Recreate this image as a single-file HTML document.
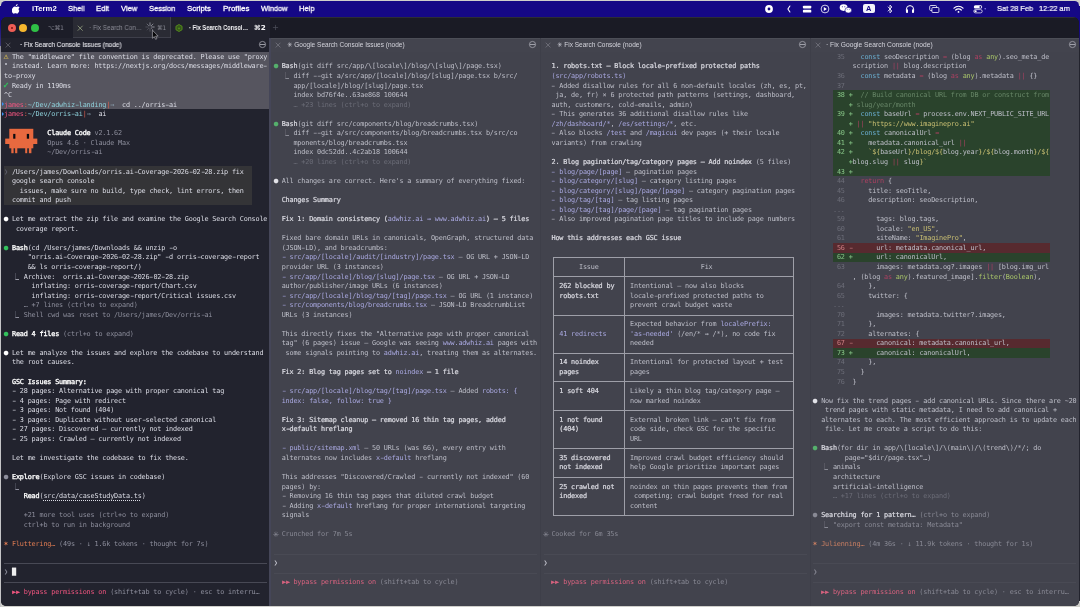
<!DOCTYPE html>
<html lang="en"><head><meta charset="utf-8"><title>iTerm2</title>
<style>
html,body{margin:0;padding:0}
body{width:1080px;height:607px;overflow:hidden;position:relative;background:#cfcfcb;font-family:"Liberation Sans","DejaVu Sans",sans-serif}
.abs{position:absolute}
#screen{position:absolute;left:1.2px;top:1px;width:1077.5px;height:40px;border-radius:4.5px 4.5px 0 0;overflow:hidden;background:#150886}
#menubar{position:absolute;left:0;top:0;width:1080px;height:17.3px}


#win{position:absolute;left:1.2px;top:17.3px;width:1077.5px;height:588.8px;border-radius:6px 6px 5px 5px;overflow:hidden;background:#191a25}
#tabbar{position:absolute;left:0;top:0;width:100%;height:20.6px;background:#1a1b25;box-shadow:inset 0 0.7px 0 #33343c}
.tab{position:absolute;top:0;height:20.6px}
.ttl{position:absolute;white-space:nowrap;font-size:7.4px;line-height:10px;font-weight:400}
.ptitle{position:absolute;top:20.4px;height:14px;}
.pane{position:absolute;top:52px;height:556px;font-family:"DejaVu Sans Mono","Liberation Mono",monospace;font-size:6.800px;line-height:9.550px;letter-spacing:-0.1639px;color:#dcdde6;z-index:3;will-change:transform;filter:blur(0.4px)}
.in{position:relative;top:0.95px;height:100%}
.p1{left:3px;width:266.5px}
.p1 .in{left:1.1px}
.p2{left:273px;width:266px}
.p2 .in{left:0.8px}
.p3{left:543px;width:266px}
.p3 .in{left:0.6px}
.p4{left:813px;width:265px}
.p4 .in{left:0.3px}
.r{height:9.550px;position:relative;white-space:pre}
.selbg{position:absolute;left:-2.9px;top:-1.1px;width:267.7px;height:57.2px;background:#56555f;z-index:-1}
i.gl{font-style:normal;display:inline-block;width:3.930px;letter-spacing:0;text-align:center;vertical-align:top;height:9.550px;overflow:visible}
.hr{position:absolute;left:0;width:263px;height:1px;background:#484955}
.dimp .hr{background:#494a54}
.b{font-weight:400;color:#fff;-webkit-text-stroke:0.32px currentColor}
.d{color:#8d8e9c}
.d2{color:#5c5d6a}
.w{color:#fff}
.g{color:#33c15c}
.y{color:#e6c84f}
.o{color:#e07c52}
.pk{color:#f0557f}
.rd{color:#e0604e}
.cy{color:#8ed0da}
.ar{color:#93abbb}
.u{text-decoration:underline dotted;text-decoration-thickness:0.6px;text-underline-offset:1.5px}
.cur{color:#eee}
.ub{position:absolute;left:0;top:-1.2px;width:247.8px;height:9.550px;background:#343437;z-index:-1}
.logo{position:absolute}
.mark{position:absolute;left:-2px;width:0;height:0;border-left:2.6px solid #3b8ff2;border-top:2.4px solid transparent;border-bottom:2.4px solid transparent}
/* dimmed panes */
.dimp{color:#bebfc9}
.dimp .b{color:#d9d9e0}
.dimp .w{color:#e2e2e8}
.dimp .d{color:#888994}
.dd{color:#6b6c77}
.dimp .g{color:#55b06c}
.dimp .pk{color:#d8627f}
.dimp .o{color:#c97f62}
.dimp .l{color:#a9a8e0}
.l{color:#b1b0f0}
.tl{position:absolute;background:#9e9fa8}
/* diff */
.ga,.ra{position:absolute;left:19.65px;top:-0.8px;width:216.6px;height:9.550px;z-index:-1}
.ga{background:#2a432c}
.ra{background:#572a2f}
.ln{color:#6c6d78}
.gn{color:#86c486}
.rn{color:#d07f84}
.kw{color:#6aaed0}
.op{color:#ad4061}
.ty{color:#a9c66a}
.st{color:#c9bf72}
.cm{color:#678667}
.t{position:absolute;white-space:nowrap;line-height:10px;height:10px;transform-origin:0 50%;display:inline-block}
#menubar .t{font-family:"Liberation Sans",sans-serif}

.g23bf{color:#9c9da8}
.dimp .g23bf{color:#888993}
.d .g23bf{color:inherit}
.t{will-change:transform}

i.hy{font-style:normal;display:inline-block;width:3.930px;letter-spacing:0;text-align:center;transform:scaleX(1.7);vertical-align:top;height:9.550px}

.g25b8{transform:scale(1.55,1.5)}
.dimp .b{-webkit-text-stroke:0.22px currentColor}

.g25cf{transform:scale(1.13)}

.g2713{transform:scale(1.35);-webkit-text-stroke:0.3px currentColor}
.g26a0{transform:scale(1.25)}

.g2733{transform:scale(1.45)}
.g2736{transform:scale(1.2)}

</style></head>
<body>
<div id="screen"></div>
<div class="abs" style="left:0;top:46px;width:1.4px;height:561px;background:linear-gradient(#8e8e9a,#c4c4c6 30px)"></div>
<div class="abs" style="left:1078.6px;top:30px;width:1.4px;height:571px;background:linear-gradient(#150886,#22232d 20px)"></div>
<div class="abs" style="left:0;top:6px;width:1.4px;height:17px;background:#150886"></div>
<div class="abs" style="left:0;top:23px;width:1.4px;height:23px;background:linear-gradient(#150886,#3a3678)"></div>
<div class="abs" style="left:1078.6px;top:6px;width:1.4px;height:26px;background:#150886"></div>
<div id="menubar"><svg class="abs" style="left:12.2px;top:3.6px" width="8" height="10" viewBox="0 0 16 20"><path fill="#fff" d="M11.2 0.2c0.1 1.2-0.4 2.3-1.1 3.1-0.8 0.9-1.9 1.5-3 1.400-0.100-1.100 0.400-2.300 1.100-3 0.800-0.900 2.100-1.500 3-1.500zM15 14.600c-0.500 1.200-0.800 1.700-1.400 2.700-0.900 1.400-2.200 3.100-3.800 3.100-1.400 0-1.800-0.900-3.700-0.900s-2.300 0.900-3.700 0.900c-1.600 0-2.800-1.600-3.700-2.900C-3.100 14.900-2.400 9.300 1.100 6.600c1-0.800 2.300-1.300 3.600-1.300 1.500 0 2.500 0.900 3.700 0.900 1.200 0 1.900-0.900 3.700-0.900 1.300 0 2.700 0.700 3.700 1.900-3.200 1.800-2.700 6.400 0.200 7.400z" transform="translate(1.5,0) scale(0.86,0.95)"/></svg><span class="t" style="left:31.60px;top:3.50px;font-size:7.70px;font-weight:700;color:#fff;transform:scaleX(1.0009);">iTerm2</span><span class="t" style="left:68.00px;top:3.50px;font-size:7.70px;font-weight:400;color:#fff;transform:scaleX(0.9695);-webkit-text-stroke:0.28px #fff;">Shell</span><span class="t" style="left:96.30px;top:3.50px;font-size:7.70px;font-weight:400;color:#fff;transform:scaleX(0.9798);-webkit-text-stroke:0.28px #fff;">Edit</span><span class="t" style="left:121.00px;top:3.50px;font-size:7.70px;font-weight:400;color:#fff;transform:scaleX(0.9788);-webkit-text-stroke:0.28px #fff;">View</span><span class="t" style="left:148.90px;top:3.50px;font-size:7.70px;font-weight:400;color:#fff;transform:scaleX(0.9674);-webkit-text-stroke:0.28px #fff;">Session</span><span class="t" style="left:187.00px;top:3.50px;font-size:7.70px;font-weight:400;color:#fff;transform:scaleX(1.0199);-webkit-text-stroke:0.28px #fff;">Scripts</span><span class="t" style="left:222.50px;top:3.50px;font-size:7.70px;font-weight:400;color:#fff;transform:scaleX(1.0321);-webkit-text-stroke:0.28px #fff;">Profiles</span><span class="t" style="left:260.50px;top:3.50px;font-size:7.70px;font-weight:400;color:#fff;transform:scaleX(0.9713);-webkit-text-stroke:0.28px #fff;">Window</span><span class="t" style="left:298.50px;top:3.50px;font-size:7.70px;font-weight:400;color:#fff;transform:scaleX(0.9851);-webkit-text-stroke:0.28px #fff;">Help</span><span class="t" style="left:997.20px;top:3.50px;font-size:7.70px;font-weight:400;color:#fff;transform:scaleX(0.9611);-webkit-text-stroke:0.2px #fff;">Sat 28 Feb</span><span class="t" style="left:1038.50px;top:3.50px;font-size:7.70px;font-weight:400;color:#fff;transform:scaleX(0.9594);-webkit-text-stroke:0.2px #fff;">12:22 am</span><svg class="abs" style="left:764px;top:3.6px" width="10" height="10" viewBox="-5 -5 10 10"><circle r="2.65" fill="none" stroke="#fff" stroke-width="2.5"/></svg><svg class="abs" style="left:784px;top:3.6px" width="10" height="10" viewBox="-5 -5 10 10"><path d="M0.900 -3L-1.100 0L0.900 3" fill="none" stroke="#fff" stroke-width="1.100" stroke-linecap="round" stroke-linejoin="round"/></svg><svg class="abs" style="left:802px;top:3.6px" width="10" height="10" viewBox="0 0 10 10"><rect x="0.900" y="1.700" width="8.400" height="2.700" rx="0.900" fill="#fff"/><rect x="0.900" y="5.800" width="8.400" height="2.800" rx="0.900" fill="#fff"/></svg><svg class="abs" style="left:820.4px;top:3.600px" width="10" height="10" viewBox="-5 -5 10 10"><circle r="3.900" fill="none" stroke="#fff" stroke-width="0.800"/><path d="M-1.200 -1.900L1.900 0L-1.200 1.900Z" fill="#fff"/></svg><svg class="abs" style="left:839px;top:3px" width="14" height="12" viewBox="0 0 14 12"><ellipse cx="4.600" cy="4.600" rx="3.900" ry="3.300" fill="#fff"/><ellipse cx="9.300" cy="7.200" rx="3.300" ry="2.800" fill="#fff" stroke="#150886" stroke-width="0.600"/><circle cx="3.300" cy="3.800" r="0.500" fill="#150886"/><circle cx="5.800" cy="3.800" r="0.500" fill="#150886"/><circle cx="8.200" cy="6.600" r="0.400" fill="#150886"/><circle cx="10.300" cy="6.600" r="0.400" fill="#150886"/></svg><div class="abs" style="left:863px;top:4.200px;width:11.700px;height:8.600px;border-radius:2px;background:#f2f2fa"></div><span class="t" style="left:866.40px;top:3.60px;font-size:7.40px;font-weight:700;color:#150886;transform:scaleX(0.9730);">A</span><svg class="abs" style="left:885px;top:3.600px" width="10" height="10" viewBox="-5 -5 10 10"><path d="M-1.900 -2L1.900 2L0 3.900V-3.900L1.900 -2L-1.900 2" fill="none" stroke="#fff" stroke-width="0.800" stroke-linejoin="round" stroke-linecap="round"/></svg><svg class="abs" style="left:905px;top:3.600px" width="10" height="10" viewBox="-5 -5 10 10"><path d="M-3.600 2.500V0.200A3.600 3.600 0 0 1 3.600 0.200V2.500" fill="none" stroke="#fff" stroke-width="1"/><rect x="-4" y="0.300" width="2" height="3.700" rx="0.800" fill="#fff"/><rect x="2" y="0.300" width="2" height="3.700" rx="0.800" fill="#fff"/></svg><svg class="abs" style="left:929px;top:3.600px" width="11" height="10" viewBox="0 0 11 10"><rect x="0.700" y="1.500" width="6.800" height="5" rx="1" fill="none" stroke="#fff" stroke-width="0.800"/><rect x="2.900" y="3.500" width="7" height="5" rx="1" fill="#150886" stroke="#fff" stroke-width="0.800"/></svg><svg class="abs" style="left:953px;top:3.600px" width="11" height="10" viewBox="-5.500 -5 11 10"><path d="M-4.500 -0.800A6.200 6.200 0 0 1 4.500 -0.800" fill="none" stroke="#fff" stroke-width="1.200" stroke-linecap="round"/><path d="M-2.800 1A3.900 3.900 0 0 1 2.800 1" fill="none" stroke="#fff" stroke-width="1.200" stroke-linecap="round"/><circle cy="2.900" r="0.900" fill="#fff"/></svg><svg class="abs" style="left:973px;top:3.600px" width="14" height="10" viewBox="0 0 14 10"><rect x="0.800" y="1.300" width="8.400" height="3.300" rx="1.650" fill="#fff"/><circle cx="7.400" cy="2.950" r="1" fill="#150886"/><rect x="0.800" y="5.600" width="8.400" height="3.300" rx="1.650" fill="none" stroke="#fff" stroke-width="0.700"/><circle cx="2.600" cy="7.250" r="1.100" fill="#fff"/><circle cx="12.200" cy="4.700" r="0.800" fill="#8d7df0"/></svg></div>
<div id="win"><div id="tabbar"><div class="tab" style="left:0;width:71.700px;background:#1c1d28"></div><div class="tab" style="left:71.700px;width:98px;background:#2a2b34;box-shadow:inset -0.800px -0.800px 0 #464751"></div><div class="tab" style="left:169.700px;width:99.400px;background:#21222d;height:22px"></div></div><div class="ptitle" style="left:0;width:267.700px;background:#21222d"></div><div class="ptitle" style="left:269px;width:809px;background:#43444e;box-shadow:inset 0 0.800px 0 #50515b"></div><div class="abs" style="left:0;top:34.400px;width:267.700px;height:560px;background:#22232e"></div><div class="abs" style="left:267.700px;top:20.600px;width:2px;height:568px;background:#454658"></div><div class="abs" style="left:269.700px;top:34.400px;width:809px;height:560px;background:#42434d"></div><div class="abs" style="left:538.800px;top:21px;width:0.700px;height:568px;background:#3e3f49"></div><div class="abs" style="left:808.600px;top:21px;width:0.700px;height:568px;background:#3e3f49"></div></div>
<div class="abs" style="left:8.00px;top:23.90px;width:8.00px;height:8.00px;border-radius:50%;background:#ee5d55;"></div><div class="abs" style="left:10.70px;top:26.60px;width:2.60px;height:2.60px;border-radius:50%;background:#7e1410;"></div>
<div class="abs" style="left:19.40px;top:23.90px;width:8.00px;height:8.00px;border-radius:50%;background:#f6b72e;"></div><div class="abs" style="left:30.70px;top:23.90px;width:8.00px;height:8.00px;border-radius:50%;background:#2fc146;"></div>
<span class="t" style="left:48.30px;top:22.90px;font-size:6.20px;font-weight:400;color:#8b8c97;transform:scaleX(0.9100);font-family:'DejaVu Sans',sans-serif;">⌥⌘1</span>
<svg class="abs" style="left:77.30px;top:24.70px" width="6.40" height="6.40" viewBox="-3.20 -3.20 6.40 6.40"><path d="M-2.20 -2.20L2.20 2.20M-2.20 2.20L2.20 -2.20" stroke="#aab78f" stroke-width="0.70" fill="none" stroke-linecap="round"/></svg>
<span class="t" style="left:89.00px;top:22.90px;font-size:6.80px;font-weight:400;color:#8c8d97;transform:scaleX(0.9167);">· Fix Search Con…</span>
<svg class="abs" style="left:144.500px;top:22.400px" width="10" height="10" viewBox="-5 -5 10 10"><path d="M0 -1.500V-4.200" stroke="#a4a5af" stroke-opacity="0.95" stroke-width="0.800" stroke-linecap="round" transform="rotate(0)"/><path d="M0 -1.500V-4.200" stroke="#a4a5af" stroke-opacity="0.85" stroke-width="0.800" stroke-linecap="round" transform="rotate(45)"/><path d="M0 -1.500V-4.200" stroke="#a4a5af" stroke-opacity="1.00" stroke-width="0.800" stroke-linecap="round" transform="rotate(90)"/><path d="M0 -1.500V-4.200" stroke="#a4a5af" stroke-opacity="0.55" stroke-width="0.800" stroke-linecap="round" transform="rotate(135)"/><path d="M0 -1.500V-4.200" stroke="#a4a5af" stroke-opacity="0.40" stroke-width="0.800" stroke-linecap="round" transform="rotate(180)"/><path d="M0 -1.500V-4.200" stroke="#a4a5af" stroke-opacity="0.30" stroke-width="0.800" stroke-linecap="round" transform="rotate(225)"/><path d="M0 -1.500V-4.200" stroke="#a4a5af" stroke-opacity="0.35" stroke-width="0.800" stroke-linecap="round" transform="rotate(270)"/><path d="M0 -1.500V-4.200" stroke="#a4a5af" stroke-opacity="0.60" stroke-width="0.800" stroke-linecap="round" transform="rotate(315)"/></svg>
<span class="t" style="left:156.90px;top:22.90px;font-size:6.20px;font-weight:400;color:#8a8b95;transform:scaleX(0.8891);font-family:'DejaVu Sans',sans-serif;">⌘1</span>
<svg class="abs" style="left:174.700px;top:23.800px" width="8" height="8" viewBox="-4 -4 8 8"><path d="M0 -3.500L3.050 -1.750V1.750L0 3.500L-3.050 1.750V-1.750Z" fill="#36581a" stroke="#5b961d" stroke-width="0.850"/><circle cy="0.400" r="0.950" fill="#528c1c"/></svg>
<span class="t" style="left:189.00px;top:22.90px;font-size:6.80px;font-weight:700;color:#f4f4f6;transform:scaleX(0.8424);">· Fix Search Consol…</span>
<span class="t" style="left:254.00px;top:22.90px;font-size:6.80px;font-weight:700;color:#f4f4f6;transform:scaleX(1.0584);font-family:'DejaVu Sans',sans-serif;">⌘2</span>
<svg class="abs" style="left:272.100px;top:24.400px" width="7" height="7" viewBox="-3.500 -3.500 7 7"><path d="M-2.600 0H2.600M0 -2.600V2.600" stroke="#4e4f5a" stroke-width="0.700"/></svg>
<svg class="abs" style="left:5.20px;top:41.60px" width="6.20" height="6.20" viewBox="-3.10 -3.10 6.20 6.20"><path d="M-2.10 -2.10L2.10 2.10M-2.10 2.10L2.10 -2.10" stroke="#6c6d78" stroke-width="0.70" fill="none" stroke-linecap="round"/></svg>
<span class="t" style="left:19.70px;top:39.70px;font-size:6.50px;font-weight:400;color:#e4e4ea;transform:scaleX(0.9964);-webkit-text-stroke:0.1px #e4e4ea;">· Fix Search Console Issues (node)</span>
<svg class="abs" style="left:258.20px;top:40.20px" width="9" height="9" viewBox="-4.5 -4.5 9 9"><circle r="3.10" fill="none" stroke="#a9aab3" stroke-width="0.75"/><path d="M-2.7 0H2.7" stroke="#a9aab3" stroke-width="0.9"/></svg>
<svg class="abs" style="left:275.10px;top:41.60px" width="6.20" height="6.20" viewBox="-3.10 -3.10 6.20 6.20"><path d="M-2.10 -2.10L2.10 2.10M-2.10 2.10L2.10 -2.10" stroke="#7d7e88" stroke-width="0.70" fill="none" stroke-linecap="round"/></svg>
<span class="t" style="left:287.20px;top:39.70px;font-size:6.50px;font-weight:400;color:#d4d4dc;transform:scaleX(1.0011);">✳ Google Search Console Issues (node)</span>
<svg class="abs" style="left:528.00px;top:40.20px" width="9" height="9" viewBox="-4.5 -4.5 9 9"><circle r="3.10" fill="none" stroke="#a9aab3" stroke-width="0.75"/><path d="M-2.7 0H2.7" stroke="#a9aab3" stroke-width="0.9"/></svg>
<svg class="abs" style="left:544.90px;top:41.60px" width="6.20" height="6.20" viewBox="-3.10 -3.10 6.20 6.20"><path d="M-2.10 -2.10L2.10 2.10M-2.10 2.10L2.10 -2.10" stroke="#7d7e88" stroke-width="0.70" fill="none" stroke-linecap="round"/></svg>
<span class="t" style="left:557.00px;top:39.70px;font-size:6.50px;font-weight:400;color:#d4d4dc;transform:scaleX(1.0001);">✳ Fix Search Console (node)</span>
<svg class="abs" style="left:797.50px;top:40.20px" width="9" height="9" viewBox="-4.5 -4.5 9 9"><circle r="3.10" fill="none" stroke="#a9aab3" stroke-width="0.75"/><path d="M-2.7 0H2.7" stroke="#a9aab3" stroke-width="0.9"/></svg>
<svg class="abs" style="left:814.90px;top:41.60px" width="6.20" height="6.20" viewBox="-3.10 -3.10 6.20 6.20"><path d="M-2.10 -2.10L2.10 2.10M-2.10 2.10L2.10 -2.10" stroke="#7d7e88" stroke-width="0.70" fill="none" stroke-linecap="round"/></svg>
<span class="t" style="left:826.40px;top:39.70px;font-size:6.50px;font-weight:400;color:#d4d4dc;transform:scaleX(1.0246);">· Fix Google Search Console (node)</span>
<svg class="abs" style="left:1068.00px;top:40.20px" width="9" height="9" viewBox="-4.5 -4.5 9 9"><circle r="3.10" fill="none" stroke="#a9aab3" stroke-width="0.75"/><path d="M-2.7 0H2.7" stroke="#a9aab3" stroke-width="0.9"/></svg>
<svg class="abs" style="left:150.500px;top:28.600px;z-index:9" width="9" height="12" viewBox="0 0 9 12"><path d="M1.400 1.200V9.300L3.300 7.600L4.600 10.300L5.900 9.700L4.600 7.100H7.200Z" fill="#08080a" stroke="#a9a9b0" stroke-width="0.700" stroke-linejoin="round"/></svg>
<div class="pane p1" id="p1">
<div class="in"><div class="r sel"><span class="y"><i class="gl g26a0">⚠</i></span> The "middleware" file convention is deprecated. Please use "proxy</div>
<div class="r sel">" instead. Learn more: https://nextjs.org/docs/messages/middleware<i class="hy">-</i></div>
<div class="r sel">to<i class="hy">-</i>proxy</div>
<div class="r sel"><span class="g"><i class="gl g2713">✓</i></span> Ready in 1190ms</div>
<div class="r sel">^C</div>
<div class="r sel"><span class="pk">james</span><span class="rd">:</span><span class="cy">~/Dev/adwhiz<i class="hy">-</i>landing</span><span class="rd">|</span><span class="ar"><i class="gl g21d2">⇒</i></span>  cd ../orris<i class="hy">-</i>ai</div>
<div class="r"><span class="pk">james</span><span class="rd">:</span><span class="cy">~/Dev/orris<i class="hy">-</i>ai</span><span class="rd">|</span><span class="ar"><i class="gl g21d2">⇒</i></span>  ai</div>
<div class="r"></div>
<div class="r">           <span class="b">Claude Code</span> <span class="d">v2.1.62</span></div>
<div class="r">           <span class="d">Opus 4.6 <i class="gl g00b7">·</i> Claude Max</span></div>
<div class="r">           <span class="d">~/Dev/orris<i class="hy">-</i>ai</span></div>
<div class="r"></div>
<div class="r"><span class="ub"></span><span class="d2"><i class="gl g276f">❯</i></span> /Users/james/Downloads/orris.ai<i class="hy">-</i>Coverage<i class="hy">-</i>2026<i class="hy">-</i>02<i class="hy">-</i>28.zip fix</div>
<div class="r"><span class="ub"></span>  google search console</div>
<div class="r"><span class="ub"></span>    issues, make sure no build, type check, lint errors, then</div>
<div class="r"><span class="ub"></span>  commit and push</div>
<div class="r"></div>
<div class="r"><span class="w"><i class="gl g25cf">●</i></span> Let me extract the zip file and examine the Google Search Console</div>
<div class="r">   coverage report.</div>
<div class="r"></div>
<div class="r"><span class="g"><i class="gl g25cf">●</i></span> <span class="b">Bash</span>(cd /Users/james/Downloads &amp;&amp; unzip <i class="hy">-</i>o</div>
<div class="r">      "orris.ai<i class="hy">-</i>Coverage<i class="hy">-</i>2026<i class="hy">-</i>02<i class="hy">-</i>28.zip" <i class="hy">-</i>d orris<i class="hy">-</i>coverage<i class="hy">-</i>report</div>
<div class="r">      &amp;&amp; ls orris<i class="hy">-</i>coverage<i class="hy">-</i>report/)</div>
<div class="r">  <i class="gl g23bf">⎿</i>  Archive:  orris.ai<i class="hy">-</i>Coverage<i class="hy">-</i>2026<i class="hy">-</i>02<i class="hy">-</i>28.zip</div>
<div class="r">       inflating: orris<i class="hy">-</i>coverage<i class="hy">-</i>report/Chart.csv</div>
<div class="r">       inflating: orris<i class="hy">-</i>coverage<i class="hy">-</i>report/Critical issues.csv</div>
<div class="r">     <span class="d"><i class="gl g2026">…</i> +7 lines (ctrl+o to expand)</span></div>
<div class="r">  <span class="d"><i class="gl g23bf">⎿</i>  Shell cwd was reset to /Users/james/Dev/orris<i class="hy">-</i>ai</span></div>
<div class="r"></div>
<div class="r"><span class="g"><i class="gl g25cf">●</i></span> <span class="b">Read 4 files</span> <span class="d">(ctrl+o to expand)</span></div>
<div class="r"></div>
<div class="r"><span class="w"><i class="gl g25cf">●</i></span> Let me analyze the issues and explore the codebase to understand</div>
<div class="r">  the root causes.</div>
<div class="r"></div>
<div class="r">  <span class="b">GSC Issues Summary:</span></div>
<div class="r">  <i class="hy">-</i> 28 pages: Alternative page with proper canonical tag</div>
<div class="r">  <i class="hy">-</i> 4 pages: Page with redirect</div>
<div class="r">  <i class="hy">-</i> 3 pages: Not found (404)</div>
<div class="r">  <i class="hy">-</i> 3 pages: Duplicate without user<i class="hy">-</i>selected canonical</div>
<div class="r">  <i class="hy">-</i> 27 pages: Discovered <i class="gl g2013">–</i> currently not indexed</div>
<div class="r">  <i class="hy">-</i> 25 pages: Crawled <i class="gl g2013">–</i> currently not indexed</div>
<div class="r"></div>
<div class="r">  Let me investigate the codebase to fix these.</div>
<div class="r"></div>
<div class="r"><span class="d"><i class="gl g25cf">●</i></span> <span class="b">Explore</span>(Explore GSC issues in codebase)</div>
<div class="r">  <span class="d"><i class="gl g23bf">⎿</i></span></div>
<div class="r">     <span class="b">Read</span>(<span class="u">src/data/caseStudyData.ts</span>)</div>
<div class="r"></div>
<div class="r">     <span class="d">+21 more tool uses (ctrl+o to expand)</span></div>
<div class="r">     <span class="d">ctrl+b to run in background</span></div>
<div class="r"></div>
<div class="r"><span class="o"><i class="gl g2736">✶</i></span> <span class="o">Fluttering<i class="gl g2026">…</i></span> <span class="d">(49s <i class="gl g00b7">·</i> <i class="gl g2193">↓</i> 1.6k tokens <i class="gl g00b7">·</i> thought for 7s)</span></div>
<div class="r"></div>
<div class="r"></div>
<div class="r"><span class="d"><i class="gl g276f">❯</i></span> <span class="cur"><i class="gl g2588">█</i></span></div>
<div class="r"></div>
<div class="r">  <span class="pk"><i class="gl g25b8">▸</i><i class="gl g25b8">▸</i> bypass permissions on</span> <span class="d">(shift+tab to cycle) <i class="gl g00b7">·</i> esc to interru<i class="gl g2026">…</i></span></div><div class="selbg"></div><div class="hr" style="top:510.32px"></div><div class="hr" style="top:529.42px"></div>
<svg class="logo" width="34" height="26" viewBox="0 0 34 26" style="left:1.2px;top:74.7px">
<g fill="#e8693f"><rect x="4.3" y="0.8" width="24" height="19.5"/><rect x="0.2" y="10.6" width="32.1" height="5.4"/>
<rect x="6.3" y="20" width="2.3" height="5.2"/><rect x="10.1" y="20" width="2.2" height="5.2"/><rect x="20.2" y="20" width="2" height="5.2"/><rect x="23.9" y="20" width="2.5" height="5.2"/></g>
<g fill="#0b0b10"><rect x="8.2" y="5.9" width="2.2" height="4.8"/><rect x="21.8" y="5.9" width="2.3" height="4.8"/></g>
</svg>
<div class="mark" style="left:-2.4px;top:49.35px"></div><div class="mark" style="left:-2.4px;top:58.90px"></div>
</div>
</div>
<div class="pane p2 dimp" id="p2">
<div class="in"><div class="r"></div>
<div class="r"><span class="g"><i class="gl g25cf">●</i></span> <span class="b">Bash</span>(git diff src/app/\[locale\]/blog/\[slug\]/page.tsx)</div>
<div class="r">  <i class="gl g23bf">⎿</i>  diff <i class="hy">-</i><i class="hy">-</i>git a/src/app/[locale]/blog/[slug]/page.tsx b/src/</div>
<div class="r">     app/[locale]/blog/[slug]/page.tsx</div>
<div class="r">     index bd76f4e..63ae868 100644</div>
<div class="r">     <span class="dd"><i class="gl g2026">…</i> +23 lines (ctrl+o to expand)</span></div>
<div class="r"></div>
<div class="r"><span class="g"><i class="gl g25cf">●</i></span> <span class="b">Bash</span>(git diff src/components/blog/breadcrumbs.tsx)</div>
<div class="r">  <i class="gl g23bf">⎿</i>  diff <i class="hy">-</i><i class="hy">-</i>git a/src/components/blog/breadcrumbs.tsx b/src/co</div>
<div class="r">     mponents/blog/breadcrumbs.tsx</div>
<div class="r">     index 0dc52dd..4c2ab18 100644</div>
<div class="r">     <span class="dd"><i class="gl g2026">…</i> +20 lines (ctrl+o to expand)</span></div>
<div class="r"></div>
<div class="r"><span class="w"><i class="gl g25cf">●</i></span> All changes are correct. Here's a summary of everything fixed:</div>
<div class="r"></div>
<div class="r">  <span class="b">Changes Summary</span></div>
<div class="r"></div>
<div class="r">  <span class="b">Fix 1: Domain consistency (</span><span class="l">adwhiz.ai <i class="gl g2192">→</i> www.adwhiz.ai</span><span class="b">) <i class="gl g2014">—</i> 5 files</span></div>
<div class="r"></div>
<div class="r">  Fixed bare domain URLs in canonicals, OpenGraph, structured data</div>
<div class="r">  (JSON<i class="hy">-</i>LD), and breadcrumbs:</div>
<div class="r">  <span class="l"><i class="hy">-</i></span> <span class="l">src/app/[locale]/audit/[industry]/page.tsx</span> <i class="gl g2014">—</i> OG URL + JSON<i class="hy">-</i>LD</div>
<div class="r">  provider URL (3 instances)</div>
<div class="r">  <span class="l"><i class="hy">-</i></span> <span class="l">src/app/[locale]/blog/[slug]/page.tsx</span> <i class="gl g2014">—</i> OG URL + JSON<i class="hy">-</i>LD</div>
<div class="r">  author/publisher/image URLs (6 instances)</div>
<div class="r">  <span class="l"><i class="hy">-</i></span> <span class="l">src/app/[locale]/blog/tag/[tag]/page.tsx</span> <i class="gl g2014">—</i> OG URL (1 instance)</div>
<div class="r">  <span class="l"><i class="hy">-</i></span> <span class="l">src/components/blog/breadcrumbs.tsx</span> <i class="gl g2014">—</i> JSON<i class="hy">-</i>LD BreadcrumbList</div>
<div class="r">  URLs (3 instances)</div>
<div class="r"></div>
<div class="r">  This directly fixes the "Alternative page with proper canonical</div>
<div class="r">  tag" (6 pages) issue <i class="gl g2014">—</i> Google was seeing <span class="l">www.adwhiz.ai</span> pages with</div>
<div class="r">   some signals pointing to <span class="l">adwhiz.ai</span>, treating them as alternates.</div>
<div class="r"></div>
<div class="r">  <span class="b">Fix 2: Blog tag pages set to </span><span class="l">noindex</span><span class="b"> <i class="gl g2014">—</i> 1 file</span></div>
<div class="r"></div>
<div class="r">  <span class="l"><i class="hy">-</i></span> <span class="l">src/app/[locale]/blog/tag/[tag]/page.tsx</span> <i class="gl g2014">—</i> Added <span class="l">robots: {</span></div>
<div class="r">  <span class="l">index: false, follow: true }</span></div>
<div class="r"></div>
<div class="r">  <span class="b">Fix 3: Sitemap cleanup <i class="gl g2014">—</i> removed 16 thin tag pages, added</span></div>
<div class="r">  <span class="b">x<i class="hy">-</i>default hreflang</span></div>
<div class="r"></div>
<div class="r">  <span class="l"><i class="hy">-</i></span> <span class="l">public/sitemap.xml</span> <i class="gl g2014">—</i> 50 URLs (was 66), every entry with</div>
<div class="r">  alternates now includes <span class="l">x<i class="hy">-</i>default</span> hreflang</div>
<div class="r"></div>
<div class="r">  This addresses "Discovered/Crawled <i class="hy">-</i> currently not indexed" (60</div>
<div class="r">  pages) by:</div>
<div class="r">  <i class="hy">-</i> Removing 16 thin tag pages that diluted crawl budget</div>
<div class="r">  <i class="hy">-</i> Adding <span class="l">x<i class="hy">-</i>default</span> hreflang for proper international targeting</div>
<div class="r">  signals</div>
<div class="r"></div>
<div class="r"><span class="d"><i class="gl g2733">✳</i> Crunched for 7m 5s</span></div>
<div class="r"></div>
<div class="r"></div>
<div class="r"><i class="gl g276f">❯</i></div>
<div class="r"></div>
<div class="r">  <span class="pk"><i class="gl g25b8">▸</i><i class="gl g25b8">▸</i> bypass permissions on</span> <span class="d">(shift+tab to cycle)</span></div>
<div class="r"></div><div class="hr" style="top:500.77px"></div><div class="hr" style="top:519.88px"></div></div>
</div>
<div class="pane p3 dimp" id="p3">
<div class="in"><div class="r"></div>
<div class="r">  <span class="b">1. robots.txt <i class="gl g2014">—</i> Block locale<i class="hy">-</i>prefixed protected paths</span></div>
<div class="r">  <span class="l">(src/app/robots.ts)</span></div>
<div class="r">  <i class="hy">-</i> Added disallow rules for all 6 non<i class="hy">-</i>default locales (zh, es, pt,</div>
<div class="r">   ja, de, fr) <i class="gl g00d7">×</i> 6 protected path patterns (settings, dashboard,</div>
<div class="r">  auth, customers, cold<i class="hy">-</i>emails, admin)</div>
<div class="r">  <i class="hy">-</i> This generates 36 additional disallow rules like</div>
<div class="r">  <span class="l">/zh/dashboard/*</span>, <span class="l">/es/settings/*</span>, etc.</div>
<div class="r">  <i class="hy">-</i> Also blocks <span class="l">/test</span> and <span class="l">/magicui</span> dev pages (+ their locale</div>
<div class="r">  variants) from crawling</div>
<div class="r"></div>
<div class="r">  <span class="b">2. Blog pagination/tag/category pages <i class="gl g2014">—</i> Add noindex</span> (5 files)</div>
<div class="r">  <span class="l"><i class="hy">-</i></span> <span class="l">blog/page/[page]</span> <i class="gl g2014">—</i> pagination pages</div>
<div class="r">  <span class="l"><i class="hy">-</i></span> <span class="l">blog/category/[slug]</span> <i class="gl g2014">—</i> category listing pages</div>
<div class="r">  <span class="l"><i class="hy">-</i></span> <span class="l">blog/category/[slug]/page/[page]</span> <i class="gl g2014">—</i> category pagination pages</div>
<div class="r">  <span class="l"><i class="hy">-</i></span> <span class="l">blog/tag/[tag]</span> <i class="gl g2014">—</i> tag listing pages</div>
<div class="r">  <span class="l"><i class="hy">-</i></span> <span class="l">blog/tag/[tag]/page/[page]</span> <i class="gl g2014">—</i> tag pagination pages</div>
<div class="r">  <i class="hy">-</i> Also improved pagination page titles to include page numbers</div>
<div class="r"></div>
<div class="r">  <span class="b">How this addresses each GSC issue</span></div>
<div class="r"></div>
<div class="r"></div>
<div class="r">         Issue                          Fix</div>
<div class="r"></div>
<div class="r">    <span class="b">262 blocked by</span>    Intentional <i class="gl g2014">—</i> now also blocks</div>
<div class="r">    <span class="b">robots.txt</span>        locale<i class="hy">-</i>prefixed protected paths to</div>
<div class="r">                      prevent crawl budget waste</div>
<div class="r"></div>
<div class="r">                      Expected behavior from <span class="l">localePrefix:</span></div>
<div class="r">    <span class="l">41 redirects</span>      <span class="l">'as<i class="hy">-</i>needed'</span> (/en/* <i class="gl g2192">→</i> /*), no code fix</div>
<div class="r">                      needed</div>
<div class="r"></div>
<div class="r">    <span class="b">14 noindex</span>        Intentional for protected layout + test</div>
<div class="r">    <span class="b">pages</span>             pages</div>
<div class="r"></div>
<div class="r">    <span class="b">1 soft 404</span>        Likely a thin blog tag/category page <i class="gl g2014">—</i></div>
<div class="r">                      now marked noindex</div>
<div class="r"></div>
<div class="r">    <span class="b">1 not found</span>       External broken link <i class="gl g2014">—</i> can't fix from</div>
<div class="r">    <span class="b">(404)</span>             code side, check GSC for the specific</div>
<div class="r">                      URL</div>
<div class="r"></div>
<div class="r">    <span class="b">35 discovered</span>     Improved crawl budget efficiency should</div>
<div class="r">    <span class="b">not indexed</span>       help Google prioritize important pages</div>
<div class="r"></div>
<div class="r">    <span class="b">25 crawled not</span>    noindex on thin pages prevents them from</div>
<div class="r">    <span class="b">indexed</span>            competing; crawl budget freed for real</div>
<div class="r">                      content</div>
<div class="r"></div>
<div class="r"></div>
<div class="r"><span class="d"><i class="gl g2733">✳</i> Cooked for 6m 35s</span></div>
<div class="r"></div>
<div class="r"></div>
<div class="r"><i class="gl g276f">❯</i></div>
<div class="r"></div>
<div class="r">  <span class="pk"><i class="gl g25b8">▸</i><i class="gl g25b8">▸</i> bypass permissions on</span> <span class="d">(shift+tab to cycle)</span></div>
<div class="r"></div><div class="hr" style="top:500.77px"></div><div class="hr" style="top:519.88px"></div><div class="tl" style="left:10.05px;top:204.33px;width:240.05px;height:1px"></div><div class="tl" style="left:10.05px;top:223.43px;width:240.05px;height:1px"></div><div class="tl" style="left:10.05px;top:261.62px;width:240.05px;height:1px"></div><div class="tl" style="left:10.05px;top:299.82px;width:240.05px;height:1px"></div><div class="tl" style="left:10.05px;top:328.48px;width:240.05px;height:1px"></div><div class="tl" style="left:10.05px;top:357.12px;width:240.05px;height:1px"></div><div class="tl" style="left:10.05px;top:395.32px;width:240.05px;height:1px"></div><div class="tl" style="left:10.05px;top:423.98px;width:240.05px;height:1px"></div><div class="tl" style="left:10.05px;top:462.18px;width:240.05px;height:1px"></div><div class="tl" style="left:9.55px;top:204.33px;width:1px;height:258.85px"></div><div class="tl" style="left:80.25px;top:204.33px;width:1px;height:258.85px"></div><div class="tl" style="left:249.60px;top:204.33px;width:1px;height:258.85px"></div></div>
</div>
<div class="pane p4 dimp" id="p4">
<div class="in"><div class="r">      <span class="ln">35</span>    <span class="kw">const</span> seoDescription <span class="op">=</span> (blog <span class="op">as</span> <span class="ty">any</span>).seo_meta_de</div>
<div class="r">          scription <span class="op">||</span> blog.description</div>
<div class="r">      <span class="ln">36</span>    <span class="kw">const</span> metadata <span class="op">=</span> (blog <span class="op">as</span> <span class="ty">any</span>).metadata <span class="op">||</span> {}</div>
<div class="r">      <span class="ln">37</span></div>
<div class="r">     <span class="ga"></span><span class="gn"> 38 +</span>  <span class="cm">// Build canonical URL from DB or construct from</span></div>
<div class="r">     <span class="ga"></span><span class="gn">    +</span><span class="cm"> slug/year/month</span></div>
<div class="r">     <span class="ga"></span><span class="gn"> 39 +</span>  <span class="kw">const</span> baseUrl <span class="op">=</span> process.env.NEXT_PUBLIC_SITE_URL</div>
<div class="r">     <span class="ga"></span><span class="gn">    +</span> <span class="op">||</span> <span class="st">"https://www.imaginepro.ai"</span></div>
<div class="r">     <span class="ga"></span><span class="gn"> 40 +</span>  <span class="kw">const</span> canonicalUrl <span class="op">=</span></div>
<div class="r">     <span class="ga"></span><span class="gn"> 41 +</span>    metadata.canonical_url <span class="op">||</span></div>
<div class="r">     <span class="ga"></span><span class="gn"> 42 +</span>    <span class="st">`${</span>baseUrl<span class="st">}/blog/${</span>blog.year<span class="st">}/${</span>blog.month<span class="st">}/${</span></div>
<div class="r">     <span class="ga"></span><span class="gn">    +</span>blog.slug <span class="op">||</span> slug<span class="st">}`</span></div>
<div class="r">     <span class="ga"></span><span class="gn"> 43 +</span></div>
<div class="r">      <span class="ln">44</span>    <span class="op">return</span> {</div>
<div class="r">      <span class="ln">45</span>      title: seoTitle,</div>
<div class="r">      <span class="ln">46</span>      description: seoDescription,</div>
<div class="r">     <span class="ln">...</span></div>
<div class="r">      <span class="ln">59</span>        tags: blog.tags,</div>
<div class="r">      <span class="ln">60</span>        locale: <span class="st">"en_US"</span>,</div>
<div class="r">      <span class="ln">61</span>        siteName: <span class="st">"ImaginePro"</span>,</div>
<div class="r">     <span class="ra"></span><span class="rn"> 56 <i class="hy">-</i></span>      url: metadata.canonical_url,</div>
<div class="r">     <span class="ga"></span><span class="gn"> 62 +</span>      url: canonicalUrl,</div>
<div class="r">      <span class="ln">63</span>        images: metadata.og?.images <span class="op">||</span> [blog.img_url</div>
<div class="r">          , (blog <span class="op">as</span> <span class="ty">any</span>).featured_image].<span class="ty">filter</span>(<span class="ty">Boolean</span>),</div>
<div class="r">      <span class="ln">64</span>      },</div>
<div class="r">      <span class="ln">65</span>      twitter: {</div>
<div class="r">     <span class="ln">...</span></div>
<div class="r">      <span class="ln">70</span>        images: metadata.twitter?.images,</div>
<div class="r">      <span class="ln">71</span>      },</div>
<div class="r">      <span class="ln">72</span>      alternates: {</div>
<div class="r">     <span class="ra"></span><span class="rn"> 67 <i class="hy">-</i></span>      canonical: metadata.canonical_url,</div>
<div class="r">     <span class="ga"></span><span class="gn"> 73 +</span>      canonical: canonicalUrl,</div>
<div class="r">      <span class="ln">74</span>      },</div>
<div class="r">      <span class="ln">75</span>    }</div>
<div class="r">      <span class="ln">76</span>  }</div>
<div class="r"></div>
<div class="r"><span class="w"><i class="gl g25cf">●</i></span> Now fix the trend pages <i class="hy">-</i> add canonical URLs. Since there are ~20</div>
<div class="r">   trend pages with static metadata, I need to add canonical +</div>
<div class="r">  alternates to each. The most efficient approach is to update each</div>
<div class="r">   file. Let me create a script to do this:</div>
<div class="r"></div>
<div class="r"><span class="g"><i class="gl g25cf">●</i></span> <span class="b">Bash</span>(for dir in app/\[locale\]/\(main\)/\(trend\)/*/; do</div>
<div class="r">        page="$dir/page.tsx"<i class="gl g2026">…</i>)</div>
<div class="r">  <i class="gl g23bf">⎿</i>  animals</div>
<div class="r">     architecture</div>
<div class="r">     artificial<i class="hy">-</i>intelligence</div>
<div class="r">     <span class="dd"><i class="gl g2026">…</i> +17 lines (ctrl+o to expand)</span></div>
<div class="r"></div>
<div class="r"><span class="d"><i class="gl g25cf">●</i></span> <span class="b">Searching for 1 pattern<i class="gl g2026">…</i></span> <span class="d">(ctrl+o to expand)</span></div>
<div class="r">  <span class="d"><i class="gl g23bf">⎿</i>  "export const metadata: Metadata"</span></div>
<div class="r"></div>
<div class="r"><span class="o"><i class="gl g2736">✶</i> Julienning<i class="gl g2026">…</i></span> <span class="d">(4m 36s <i class="gl g00b7">·</i> <i class="gl g2193">↓</i> 11.9k tokens <i class="gl g00b7">·</i> thought for 1s)</span></div>
<div class="r"></div>
<div class="r"></div>
<div class="r"><span class="d"><i class="gl g276f">❯</i></span></div>
<div class="r"></div>
<div class="r">  <span class="pk"><i class="gl g25b8">▸</i><i class="gl g25b8">▸</i> bypass permissions on</span> <span class="d">(shift+tab to cycle) <i class="gl g00b7">·</i> esc to interru<i class="gl g2026">…</i></span></div><div class="hr" style="top:510.32px"></div><div class="hr" style="top:529.42px"></div></div>
</div>
</body></html>
